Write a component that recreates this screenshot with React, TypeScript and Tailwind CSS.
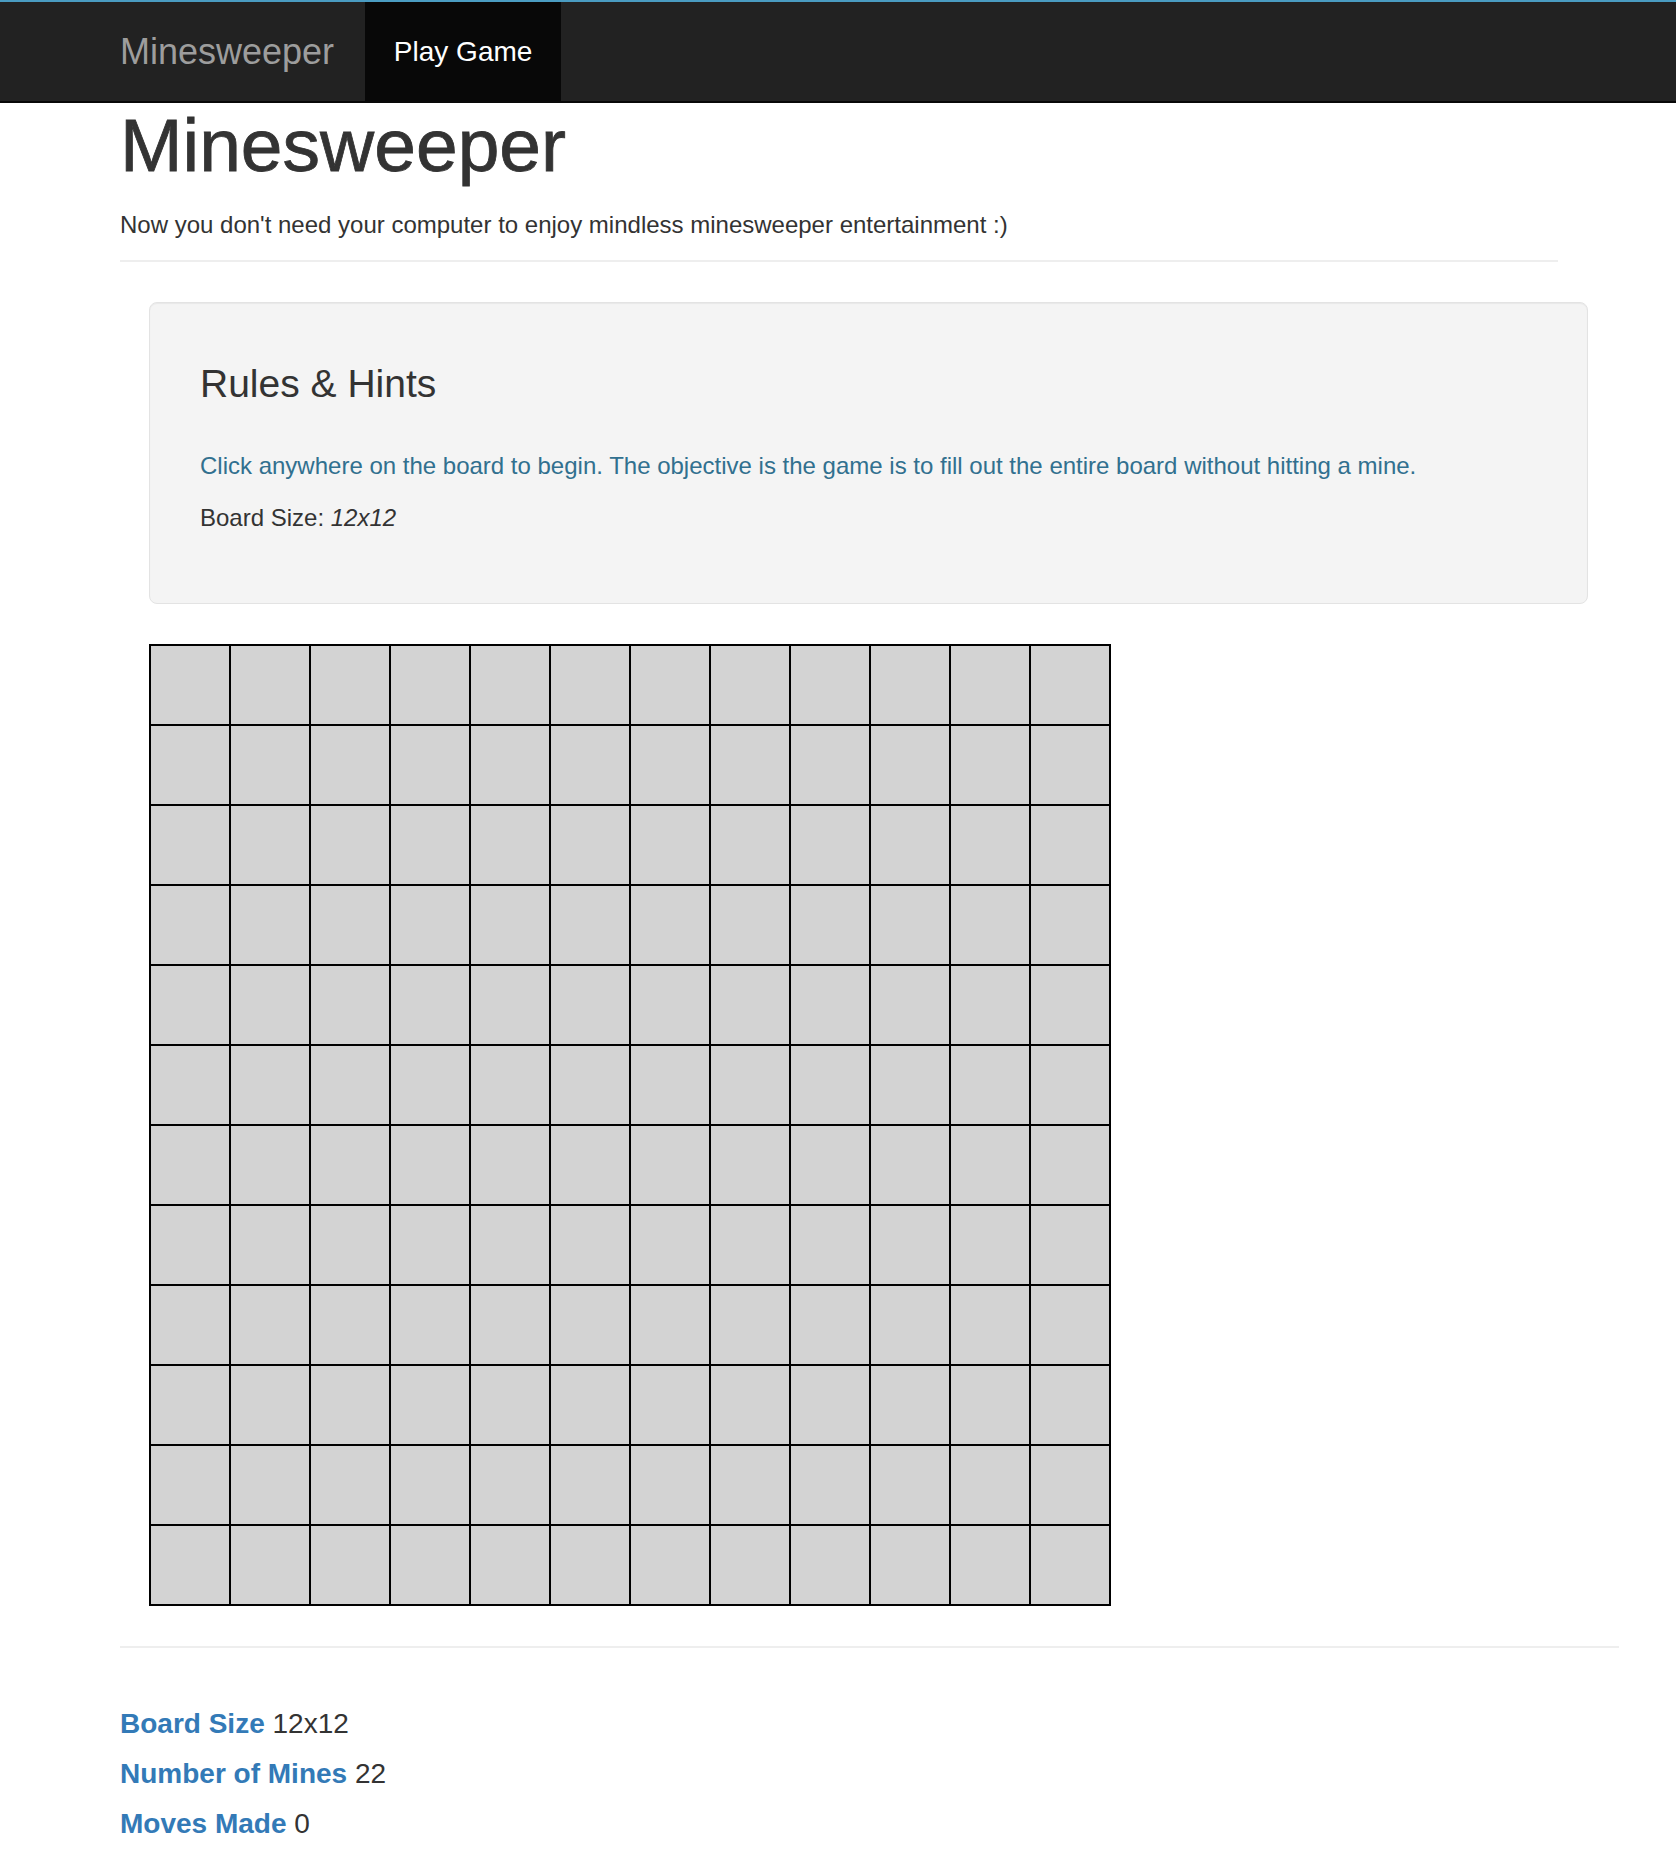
import React from "react";

const SIZE = 12;

function Board() {
  const cells = Array.from({ length: SIZE * SIZE }, (_, i) => i);
  return (
    <div className="ml-[29px] mt-[40px] grid w-fit grid-cols-[repeat(12,80px)] border-l-2 border-t-2 border-black">
      {cells.map((i) => (
        <div key={i} className="h-[80px] w-[80px] border-b-2 border-r-2 border-black bg-[#d3d3d3]" />
      ))}
    </div>
  );
}

export default function App() {
  return (
    <div className="min-h-screen bg-white font-['Liberation_Sans',Arial,sans-serif] text-[#333]">
      {/* Navbar */}
      <nav className="flex h-[103px] items-stretch border-b-2 border-t-2 border-b-[#080808] border-t-[#4a9cc2] bg-[#222]">
        <div className="flex items-center pl-[120px] pr-[31px]">
          <span className="text-[36px] leading-[36px] text-[#9d9d9d]">Minesweeper</span>
        </div>
        <div className="flex w-[196px] items-center justify-center bg-[#080808]">
          <span className="text-[28px] leading-[28px] text-white">Play Game</span>
        </div>
      </nav>

      <main className="ml-[120px]">
        <h1 className="mt-[2px] text-[75px] leading-[80px] font-medium [-webkit-text-stroke:0.8px_#333]">Minesweeper</h1>
        <p className="mt-[23px] text-[24px] leading-[34px]">
          Now you don't need your computer to enjoy mindless minesweeper entertainment :)
        </p>
        <div className="mt-[18px] h-[2px] w-[1438px] bg-[#eee]" />

        {/* Rules & Hints */}
        <div className="ml-[29px] mt-[40px] h-[302px] w-[1439px] rounded-[8px] border border-[#e3e3e3] bg-[#f4f4f4] pl-[50px] pt-[60px] shadow-[inset_0_1px_1px_rgba(0,0,0,0.05)]">
          <h3 className="text-[39px] leading-[42px] font-light">Rules &amp; Hints</h3>
          <p className="mt-[44px] text-[24px] leading-[34px] text-[#31708f]">
            Click anywhere on the board to begin. The objective is the game is to fill out the entire board without hitting a mine.
          </p>
          <p className="mt-[18px] text-[24px] leading-[34px]">
            Board Size: <em>12x12</em>
          </p>
        </div>

        <Board />

        <div className="mt-[40px] h-[2px] w-[1499px] bg-[#eee]" />

        <div className="mt-[51px] text-[28px] leading-[50px]">
          <div>
            <span className="font-bold text-[#337ab7]">Board Size</span> 12x12
          </div>
          <div>
            <span className="font-bold text-[#337ab7]">Number of Mines</span> 22
          </div>
          <div>
            <span className="font-bold text-[#337ab7]">Moves Made</span> 0
          </div>
        </div>
      </main>
    </div>
  );
}
